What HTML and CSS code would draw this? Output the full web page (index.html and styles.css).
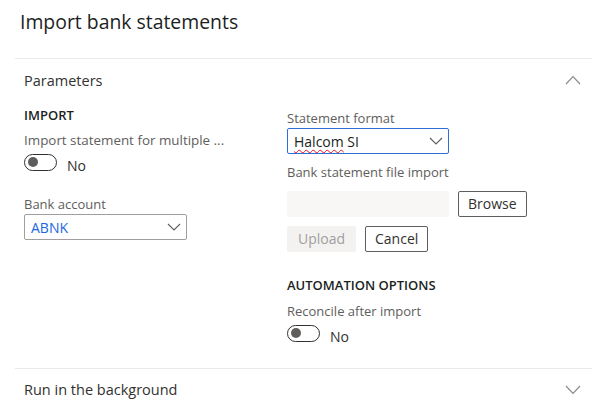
FILE: index.html
```html
<!DOCTYPE html>
<html lang="en">
<head>
<meta charset="utf-8">
<title>Import bank statements</title>
<link rel="stylesheet" href="styles.css">
</head>
<body>
<div class="page">
  <h1 class="title">Import bank statements</h1>

  <section class="panel">
    <div class="panel-head">
      <span class="panel-title">Parameters</span>
      <svg class="chev" width="16" height="10" viewBox="0 0 16 10"><path d="M1 9 L8 1.5 L15 9" fill="none" stroke="#8a8886" stroke-width="1.1"/></svg>
    </div>
    <div class="panel-body">
      <div class="col">
        <div class="group-title">IMPORT</div>
        <div class="label label-wide">Import statement for multiple ...</div>
        <div class="toggle-row">
          <span class="toggle"><span class="thumb"></span></span>
          <span class="toggle-text">No</span>
        </div>
        <div class="label label-gap">Bank account</div>
        <div class="combo combo-bank">
          <span class="combo-value blue">ABNK</span>
          <svg class="combo-chev" width="14" height="8" viewBox="0 0 14 8"><path d="M1 1 L7 7 L13 1" fill="none" stroke="#605e5c" stroke-width="1.1"/></svg>
        </div>
      </div>
      <div class="col">
        <div class="label label-top">Statement format</div>
        <div class="combo combo-format">
          <span class="combo-value"><span class="squiggle">Halcom</span> SI</span>
          <svg class="combo-chev" width="14" height="8" viewBox="0 0 14 8"><path d="M1 1 L7 7 L13 1" fill="none" stroke="#605e5c" stroke-width="1.1"/></svg>
        </div>
        <div class="label label-file">Bank statement file import</div>
        <div class="file-row">
          <div class="file-input"></div>
          <button class="btn">Browse</button>
        </div>
        <div class="btn-row">
          <button class="btn btn-disabled">Upload</button>
          <button class="btn">Cancel</button>
        </div>
        <div class="group-title group-auto">AUTOMATION OPTIONS</div>
        <div class="label label-recon">Reconcile after import</div>
        <div class="toggle-row">
          <span class="toggle"><span class="thumb"></span></span>
          <span class="toggle-text">No</span>
        </div>
      </div>
    </div>
  </section>

  <section class="panel panel-bottom">
    <div class="panel-head">
      <span class="panel-title">Run in the background</span>
      <svg class="chev" width="16" height="10" viewBox="0 0 16 10"><path d="M1 1 L8 8.5 L15 1" fill="none" stroke="#8a8886" stroke-width="1.1"/></svg>
    </div>
  </section>
</div>
</body>
</html>
```

FILE: styles.css
```css
* { box-sizing: border-box; }

html, body {
  margin: 0;
  padding: 0;
  background: #ffffff;
}

body {
  font-family: "Open Sans", "Noto Sans", sans-serif;
  color: #323130;
  overflow: hidden;
}

.page {
  width: 602px;
  height: 413px;
}

.title {
  margin: 0;
  padding: 9px 0 0 20px;
  height: 58px;
  font-size: 19.4px;
  font-weight: 400;
  line-height: 26px;
  color: #201f1e;
}

.panel {
  margin: 0 10px 0 15px;
  border-top: 1px solid #edebe9;
}

.panel-head {
  display: flex;
  align-items: center;
  justify-content: space-between;
  height: 42px;
  padding: 0 11px 0 9px;
}

.panel-title {
  font-size: 14.5px;
  color: #323130;
}

.panel-body {
  display: grid;
  grid-template-columns: 263px 1fr;
  padding: 5px 0 0 9px;
  height: 267px;
}

.col {
  display: flex;
  flex-direction: column;
  align-items: flex-start;
}

.group-title {
  font-size: 13px;
  font-weight: 600;
  line-height: 18px;
  color: #201f1e;
}

.label {
  font-size: 13px;
  line-height: 18px;
  color: #605e5c;
  margin-top: 7px;
}

.label-wide { font-size: 13.4px; }
.label-top { margin-top: 3px; }
.label-gap { margin-top: 23px; }
.label-file { margin-top: 9px; }
.label-recon { margin-top: 8px; }

.toggle-row {
  display: flex;
  align-items: center;
  margin-top: 3px;
  height: 20px;
}

.toggle {
  width: 33px;
  height: 17px;
  border: 1px solid #323130;
  border-radius: 9px;
  display: flex;
  align-items: center;
  padding-left: 3px;
}

.thumb {
  width: 10px;
  height: 10px;
  border-radius: 50%;
  background: #605e5c;
}

.toggle-text {
  font-size: 14px;
  margin-left: 10px;
  padding-top: 7px;
  color: #323130;
}

.combo {
  display: flex;
  align-items: center;
  justify-content: space-between;
  height: 26px;
  border: 1px solid #a19f9d;
  border-radius: 2px;
  padding: 0 5px 0 6px;
  margin-top: 1px;
}

.combo-bank { width: 163px; }

.combo-format {
  width: 162px;
  border-color: #2b6fd6;
}

.combo-value {
  font-size: 14px;
  color: #201f1e;
}

.combo-value.blue { color: #2266e3; }

.squiggle {
  text-decoration: underline wavy #e81123;
  text-decoration-thickness: 1px;
  text-underline-offset: 2px;
}

.combo-chev { display: block; }

.file-row {
  display: flex;
  gap: 9px;
  margin-top: 10px;
}

.file-input {
  width: 162px;
  height: 26px;
  background: #f8f7f6;
  border-radius: 2px;
}

.btn {
  font-family: inherit;
  font-size: 14px;
  height: 26px;
  padding: 0 9px;
  background: #ffffff;
  border: 1px solid #605e5c;
  border-radius: 2px;
  color: #323130;
  line-height: 24px;
}

.btn-row {
  display: flex;
  gap: 9px;
  margin-top: 9px;
}

.btn-disabled {
  background: #f3f2f1;
  border-color: #f3f2f1;
  color: #a19f9d;
  width: 69px;
}

.group-auto { margin-top: 24px; }

.panel-bottom .panel-head { height: 41px; }

.chev { display: block; }
```
